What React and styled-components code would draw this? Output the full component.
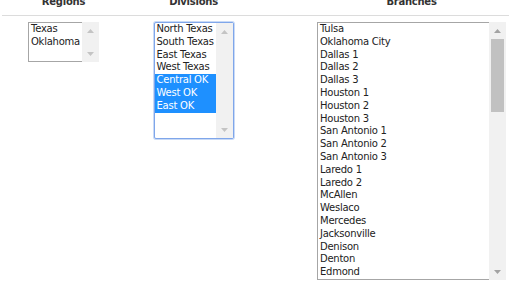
import React from 'react';
import styled, { createGlobalStyle } from 'styled-components';

const GlobalStyle = createGlobalStyle`
  html, body {
    margin: 0;
    padding: 0;
    background: #fff;
    overflow: hidden;
  }
  body {
    font-family: "DejaVu Sans", Verdana, sans-serif;
  }
`;

const ROW = 12.8;

const Page = styled.div`
  margin: -4px 0 0 2px;
  width: 560px;
`;

const Grid = styled.div`
  display: grid;
  grid-template-columns: 123px 137px 299px;
`;

const HeadCell = styled.div`
  padding-bottom: 7px;
  border-bottom: 1px solid #dcdcdc;
  text-align: center;
  font-size: 10px;
  line-height: 12px;
  font-weight: bold;
  letter-spacing: -0.25px;
  color: #333;
`;

const BodyCell = styled.div`
  display: flex;
  justify-content: center;
  align-items: flex-start;
  padding-top: 6px;
`;

const Box = styled.div`
  display: flex;
  background: #fff;
  border: ${p => (p.$focused ? '1px solid #7fa6ea' : 'none')};
  border-radius: ${p => (p.$focused ? '2px' : '0')};
  box-shadow: ${p => (p.$focused ? '0 0 0 1px #c9daf6' : 'none')};
`;

const Options = styled.div`
  width: ${p => p.$width}px;
  height: ${p => p.$rows * ROW}px;
  overflow: hidden;
  border: ${p => (p.$focused ? 'none' : '1px solid #a6a6a6')};
  border-right: none;
`;

const Option = styled.div`
  padding: 0 2px;
  height: ${ROW}px;
  font-size: 10px;
  line-height: ${ROW}px;
  letter-spacing: -0.25px;
  white-space: nowrap;
  color: ${p => (p.$selected ? '#fff' : '#222')};
  background: ${p => (p.$selected ? '#1e90ff' : 'transparent')};
`;

const Track = styled.div`
  width: 17px;
  display: flex;
  flex-direction: column;
  align-items: center;
  background: #f1f1f1;
`;

const ArrowButton = styled.div`
  width: 17px;
  height: 17px;
  flex: none;
  display: flex;
  align-items: center;
  justify-content: center;
  color: ${p => (p.$disabled ? '#c4c4c4' : '#a3a3a3')};
`;

const Rail = styled.div`
  flex: 1;
  align-self: stretch;
  padding: 0 2px;
`;

const Thumb = styled.div`
  background: #c1c1c1;
`;

const Arrow = ({ down }) => (
  <svg width="7" height="4" viewBox="0 0 7 4">
    <path d={down ? 'M0 0H7L3.5 4Z' : 'M3.5 0L7 4H0Z'} fill="currentColor" />
  </svg>
);

const Scrollbar = ({ thumb }) => (
  <Track>
    <ArrowButton $disabled={!thumb}>
      <Arrow />
    </ArrowButton>
    <Rail>{thumb && <Thumb style={{ height: thumb }} />}</Rail>
    <ArrowButton $disabled={!thumb}>
      <Arrow down />
    </ArrowButton>
  </Track>
);

const ListBox = ({ items, rows, width, selected = [], focused, thumb }) => (
  <Box $focused={focused}>
    <Options $rows={rows} $width={width} $focused={focused}>
      {items.map(item => (
        <Option key={item} $selected={selected.includes(item)}>
          {item}
        </Option>
      ))}
    </Options>
    <Scrollbar thumb={thumb} />
  </Box>
);

const regions = ['Texas', 'Oklahoma'];

const divisions = [
  'North Texas',
  'South Texas',
  'East Texas',
  'West Texas',
  'Central OK',
  'West OK',
  'East OK',
];

const branches = [
  'Tulsa',
  'Oklahoma City',
  'Dallas 1',
  'Dallas 2',
  'Dallas 3',
  'Houston 1',
  'Houston 2',
  'Houston 3',
  'San Antonio 1',
  'San Antonio 2',
  'San Antonio 3',
  'Laredo 1',
  'Laredo 2',
  'McAllen',
  'Weslaco',
  'Mercedes',
  'Jacksonville',
  'Denison',
  'Denton',
  'Edmond',
];

export default function App() {
  return (
    <>
      <GlobalStyle />
      <Page>
        <Grid>
          <HeadCell>Regions</HeadCell>
          <HeadCell>Divisions</HeadCell>
          <HeadCell>Branches</HeadCell>
          <BodyCell>
            <ListBox items={regions} rows={3} width={53} />
          </BodyCell>
          <BodyCell>
            <ListBox
              items={divisions}
              rows={9}
              width={61}
              focused
              selected={['Central OK', 'West OK', 'East OK']}
            />
          </BodyCell>
          <BodyCell>
            <ListBox items={branches} rows={20} width={171} thumb={73} />
          </BodyCell>
        </Grid>
      </Page>
    </>
  );
}
